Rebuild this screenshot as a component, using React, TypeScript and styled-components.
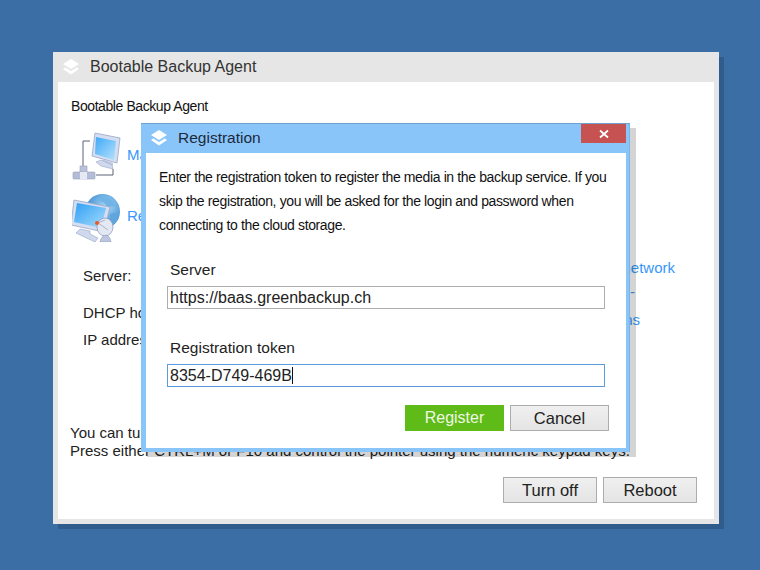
import React from "react";
import styled, { createGlobalStyle } from "styled-components";

const Global = createGlobalStyle`
  html, body { margin: 0; padding: 0; }
  body { background: #3b6ea5; font-family: "Liberation Sans", Arial, sans-serif; color: #111; }
`;

const Desktop = styled.div`
  position: relative;
  width: 760px;
  height: 570px;
  box-sizing: border-box;
  padding: 52px 0 0 53px;
  overflow: hidden;
  background: #3b6ea5;
`;

const MainWindow = styled.div`
  width: 666px;
  height: 472px;
  box-sizing: border-box;
  display: flex;
  flex-direction: column;
  background: #e6e6e6;
  box-shadow: 5px 5px 0 #2f5c8a;
  padding: 0 5px 5px;
`;

const TitleBar = styled.div`
  flex: none;
  height: 30px;
  display: flex;
  align-items: center;
  gap: 9px;
  padding-left: 3px;
  font-size: 16px;
  color: #333;
`;

const Body = styled.div`
  flex: 1;
  display: flex;
  flex-direction: column;
  background: #fff;
  padding: 16px 16px 16px 12px;
`;

const Heading = styled.div`
  font-size: 14px;
  line-height: 16px;
  letter-spacing: -0.42px;
  margin: 0 0 17px 1px;
`;

const ActionRow = styled.div`
  display: flex;
  align-items: center;
  gap: 5px;
  height: 50px;
  margin-bottom: 11px;
  font-size: 15px;
  color: #3797fb;
  padding-left: 2px;
  &:nth-of-type(n + 3) {
    margin-bottom: 0;
  }
`;

const ActionText = styled.span`
  padding-bottom: 4px;
`;

const InfoColumns = styled.div`
  display: flex;
  justify-content: space-between;
  margin-top: 17px;
  padding-left: 13px;
  font-size: 15px;
  line-height: 18px;
  color: #222;
`;

const InfoLabels = styled.div`
  display: flex;
  flex-direction: column;
  padding-top: 8px;
`;

const InfoLabel = styled.span<{ $gap: number }>`
  margin-top: ${(p) => p.$gap}px;
`;

const InfoLinks = styled.div`
  display: flex;
  flex-direction: column;
  align-items: flex-end;
`;

const InfoLink = styled.span<{ $right: number; $gap: number }>`
  color: #3797fb;
  white-space: nowrap;
  margin-right: ${(p) => p.$right}px;
  margin-top: ${(p) => p.$gap}px;
`;

const Hint = styled.div`
  margin-top: auto;
  font-size: 15px;
  line-height: 18px;
  color: #222;
  white-space: nowrap;
`;

const Footer = styled.div`
  display: flex;
  justify-content: flex-end;
  gap: 6px;
  margin-top: 17px;
  padding-right: 1px;
`;

const Button = styled.button<{ $primary?: boolean; $width: number }>`
  width: ${(p) => p.$width}px;
  height: 26px;
  box-sizing: border-box;
  padding: 0;
  font: ${(p) => (p.$primary ? 16 : 16.5)}px "Liberation Sans", Arial, sans-serif;
  color: ${(p) => (p.$primary ? "#eef8e4" : "#222")};
  border: ${(p) => (p.$primary ? "none" : "1px solid #adadad")};
  background: ${(p) => (p.$primary ? "#5fbb17" : "linear-gradient(#f0f0f0, #e4e4e4)")};
`;

const Dialog = styled.div`
  position: absolute;
  left: 141px;
  top: 123px;
  width: 489px;
  height: 329px;
  box-sizing: border-box;
  display: flex;
  flex-direction: column;
  background: #8ac5fa;
  border-top: 1px solid #6f9fcf;
  border-right: 1px solid #7cb4e8;
  box-shadow: 6px 5px 0 rgba(0, 0, 0, 0.17);
  padding: 0 3px 4px 5px;
`;

const DialogTitle = styled.div`
  flex: none;
  position: relative;
  height: 29px;
  box-sizing: border-box;
  padding: 0 0 2px 3px;
  display: flex;
  align-items: center;
  gap: 9px;
  font-size: 15.5px;
  color: #1d2a3a;
`;

const CloseButton = styled.div`
  position: absolute;
  right: 0;
  top: 0;
  width: 45px;
  height: 19px;
  display: flex;
  align-items: center;
  justify-content: center;
  background: #c65252;
`;

const DialogBody = styled.div`
  flex: 1;
  display: flex;
  flex-direction: column;
  background: #fff;
  padding: 12px 17px 0 13px;
`;

const Message = styled.p`
  margin: 0 0 24px;
  font-size: 14px;
  line-height: 24px;
  letter-spacing: -0.37px;
  white-space: nowrap;
  color: #111;
`;

const FieldLabel = styled.label`
  display: block;
  font-size: 15.5px;
  line-height: 18px;
  margin: 0 0 7px 11px;
  color: #222;
`;

const FieldBox = styled.div<{ $focus?: boolean }>`
  width: 438px;
  height: 23px;
  margin-left: 8px;
  box-sizing: border-box;
  display: flex;
  align-items: center;
  padding-left: 2px;
  font-size: 16px;
  color: #222;
  border: 1px solid ${(p) => (p.$focus ? "#5b9bdd" : "#adadad")};
  margin-bottom: ${(p) => (p.$focus ? 18 : 30)}px;
`;

const Caret = styled.span`
  display: inline-block;
  width: 1px;
  height: 17px;
  background: #111;
`;

const DialogActions = styled.div`
  display: flex;
  justify-content: flex-end;
  gap: 6px;
`;

const StackIcon = () => (
  <svg width="20" height="20" viewBox="0 0 20 20" fill="#fff">
    <path d="M10 2 L18 7 L10 12 L2 7 Z" />
    <path d="M4.2 10.4 L10 14 L15.8 10.4 L18 12 L10 17.6 L2 12 Z" />
  </svg>
);

const NetworkIcon = () => (
  <svg width="50" height="50" viewBox="0 -1 50 50">
    <defs>
      <linearGradient id="screenA" x1="0" y1="0" x2="1" y2="1">
        <stop offset="0" stopColor="#3fa9f7" />
        <stop offset="1" stopColor="#b5e2fc" />
      </linearGradient>
    </defs>
    <path d="M18 9 H11 V34" fill="none" stroke="#5c6178" strokeWidth="1" />
    <path d="M24 43 H41 V37" fill="none" stroke="#5c6178" strokeWidth="1" />
    <path d="M23 1 L48 6 L45 31 L20 24 Z" fill="#d5ddf0" stroke="#98a5c8" strokeWidth="0.8" />
    <path d="M24 5 L44 9 L42 28 L23 22 Z" fill="url(#screenA)" />
    <path d="M33 28 L41 31 L41 34 L40 33 L29 28 Z" fill="#bcc7e0" />
    <path d="M24 30 L29 28 L40 33 L41 37 L29 34 Z" fill="#cfd8ec" stroke="#9aa6c6" strokeWidth="0.6" />
    <rect x="8" y="34" width="7" height="8" fill="#b9c2da" stroke="#98a1bd" strokeWidth="0.6" />
    <rect x="1" y="40" width="22" height="7" rx="1" fill="#b4bdd6" stroke="#98a1bd" strokeWidth="0.6" />
    <rect x="8" y="40" width="7" height="7" fill="#e4e9f4" />
  </svg>
);

const GlobeIcon = () => (
  <svg width="50" height="50" viewBox="0 -2 50 50">
    <defs>
      <linearGradient id="screenB" x1="0" y1="0" x2="1" y2="1">
        <stop offset="0" stopColor="#2f9ff5" />
        <stop offset="1" stopColor="#a8ddfb" />
      </linearGradient>
      <radialGradient id="globe" cx="0.6" cy="0.35" r="0.7">
        <stop offset="0" stopColor="#a9d8f4" />
        <stop offset="1" stopColor="#2a7fcc" />
      </radialGradient>
    </defs>
    <circle cx="30.5" cy="17.5" r="17.5" fill="url(#globe)" />
    <path d="M30 2 l10 4 3 6 -7 1 -5 -5 -7 -2 Z" fill="#6fb4e4" />
    <path d="M38 20 l8 -2 -1 9 -6 5 Z" fill="#5ea6dc" />
    <path d="M2 6 L38 13 L32 38 L-1 31 Z" fill="#d5ddf0" stroke="#98a5c8" strokeWidth="0.8" />
    <path d="M5 9 L34 14 L29 34 L2 28 Z" fill="url(#screenB)" />
    <path d="M8 35 L18 37 L18 40 L26 44 L23 48 L4 39 Z" fill="#cfd8ec" stroke="#9aa6c6" strokeWidth="0.6" />
    <ellipse cx="33" cy="33" rx="8" ry="9" fill="#e3e8f3" stroke="#8f9cbd" strokeWidth="0.8" />
    <path d="M26 29 L36 36 M26 29 L33 26" stroke="#9aa6c6" strokeWidth="0.8" />
    <circle cx="25" cy="29" r="2" fill="#ea5a22" />
    <path d="M28 48 Q29 42 34 41 Q38 42 39 48 Z" fill="#bcc6de" stroke="#8f9cbd" strokeWidth="0.6" />
  </svg>
);

export default function App() {
  return (
    <>
      <Global />
      <Desktop>
        <MainWindow>
          <TitleBar>
            <StackIcon />
            Bootable Backup Agent
          </TitleBar>
          <Body>
            <Heading>Bootable Backup Agent</Heading>
            <ActionRow>
              <NetworkIcon />
              <ActionText>Manage this machine</ActionText>
            </ActionRow>
            <ActionRow>
              <GlobeIcon />
              <ActionText>Recover from backup</ActionText>
            </ActionRow>
            <InfoColumns>
              <InfoLabels>
                <InfoLabel $gap={0}>Server:</InfoLabel>
                <InfoLabel $gap={19}>DHCP hostname:</InfoLabel>
                <InfoLabel $gap={9}>IP address:</InfoLabel>
              </InfoLabels>
              <InfoLinks>
                <InfoLink $right={23} $gap={0}>Configure network</InfoLink>
                <InfoLink $right={63} $gap={6}>Proxy settings -</InfoLink>
                <InfoLink $right={58} $gap={10}>Options</InfoLink>
              </InfoLinks>
            </InfoColumns>
            <Hint>
              You can turn on the mouse pointer if you do not have a mouse or a touchpad.
              <br />
              Press either CTRL+M or F10 and control the pointer using the numeric keypad keys.
            </Hint>
            <Footer>
              <Button $width={94}>Turn off</Button>
              <Button $width={94}>Reboot</Button>
            </Footer>
          </Body>
        </MainWindow>
        <Dialog>
          <DialogTitle>
            <StackIcon />
            Registration
            <CloseButton>
              <svg width="10" height="10" viewBox="0 0 10 10">
                <path d="M1 1.5 L9 8.5 M9 1.5 L1 8.5" stroke="#fff" strokeWidth="1.8" />
              </svg>
            </CloseButton>
          </DialogTitle>
          <DialogBody>
            <Message>
              Enter the registration token to register the media in the backup service. If you
              <br />
              skip the registration, you will be asked for the login and password when
              <br />
              connecting to the cloud storage.
            </Message>
            <FieldLabel>Server</FieldLabel>
            <FieldBox>https://baas.greenbackup.ch</FieldBox>
            <FieldLabel>Registration token</FieldLabel>
            <FieldBox $focus>
              8354-D749-469B
              <Caret />
            </FieldBox>
            <DialogActions>
              <Button $primary $width={99}>Register</Button>
              <Button $width={99}>Cancel</Button>
            </DialogActions>
          </DialogBody>
        </Dialog>
      </Desktop>
    </>
  );
}
